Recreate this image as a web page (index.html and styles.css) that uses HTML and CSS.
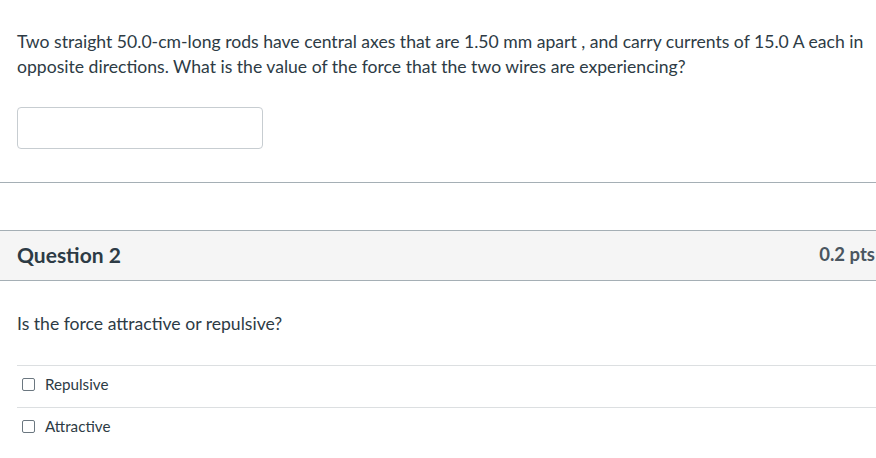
FILE: index.html
```html
<!DOCTYPE html>
<html lang="en">
<head>
<meta charset="utf-8">
<title>Quiz</title>
<link rel="stylesheet" href="styles.css">
</head>
<body>
<div class="question">
  <div class="q-text">Two straight 50.0-cm-long rods have central axes that are 1.50 mm apart , and carry currents of 15.0 A each in opposite directions. What is the value of the force that the two wires are experiencing?</div>
  <input class="answer-input" type="text" aria-label="Answer">
</div>
<hr class="divider">
<div class="question">
  <div class="q-header">
    <span class="q-title">Question 2</span>
    <span class="q-pts">0.2 pts</span>
  </div>
  <div class="q-text q-text2">Is the force attractive or repulsive?</div>
  <div class="answers">
    <label class="answer"><span class="box"></span><span>Repulsive</span></label>
    <label class="answer"><span class="box"></span><span>Attractive</span></label>
  </div>
</div>
</body>
</html>
```
FILE: styles.css
```css
* { box-sizing: border-box; }
body {
  margin: 0;
  font-family: Lato, "Open Sans", "Liberation Sans", sans-serif;
  color: #2d3b45;
  background: #fff;
}
.q-text {
  padding: 29px 12px 0 17px;
  font-size: 17.6px;
  line-height: 25px;
}
.answer-input {
  display: block;
  margin: 28px 0 0 17px;
  width: 246px;
  height: 42px;
  border: 1px solid #c7cdd1;
  border-radius: 4px;
  background: #fff;
}
.divider {
  margin: 33px 0 0 0;
  border: 0;
  border-top: 1px solid #a5afb5;
  height: 0;
}
.q-header {
  margin-top: 47px;
  height: 51px;
  display: flex;
  align-items: center;
  justify-content: space-between;
  padding: 0 1px 3px 17px;
  background: #f5f5f5;
  border-top: 1px solid #a5afb5;
  border-bottom: 1px solid #a5afb5;
}
.q-title {
  font-size: 21px;
  font-weight: 700;
}
.q-pts {
  font-size: 18.5px;
  font-weight: 700;
  color: #4a5660;
}
.q-text2 {
  padding-top: 30px;
}
.answers {
  margin: 29px 0 0 17px;
}
.answer {
  display: flex;
  align-items: center;
  gap: 10px;
  height: 42px;
  padding: 0 0 5px 5px;
  border-top: 1px solid #dcdfe1;
  font-size: 15.2px;
}
.box {
  width: 13px;
  height: 13px;
  border: 1px solid #6b7780;
  border-radius: 2px;
  background: #fff;
}
```
